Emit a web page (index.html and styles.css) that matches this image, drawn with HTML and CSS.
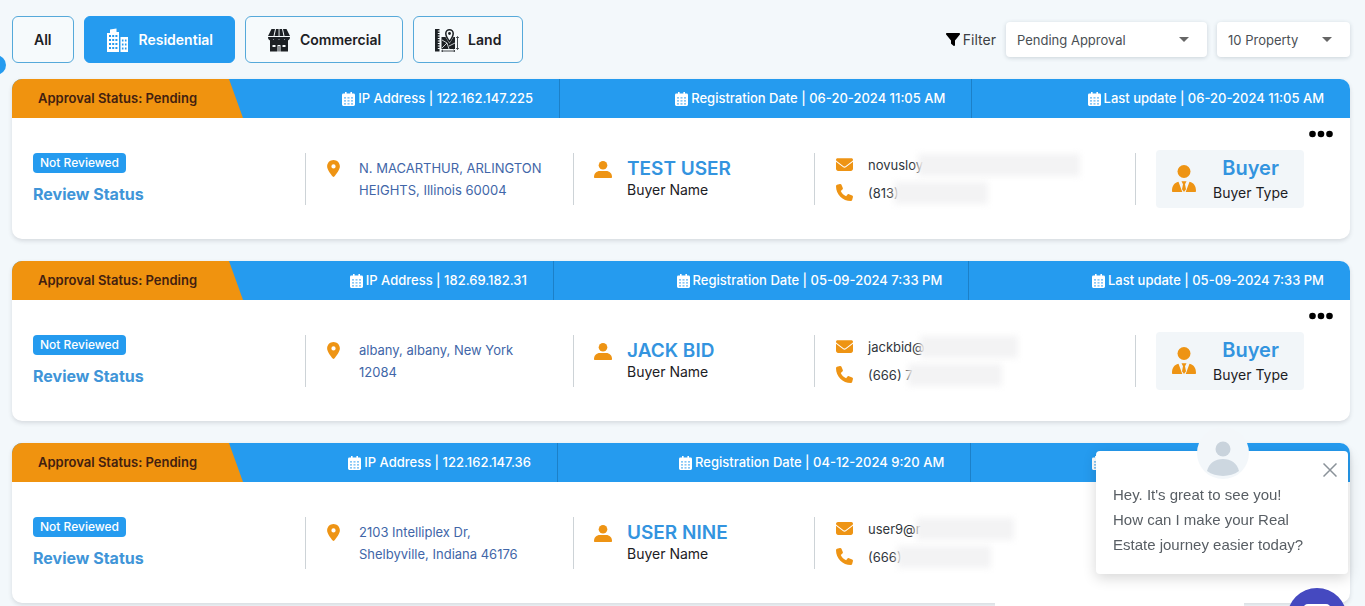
FILE: index.html
```html
<!DOCTYPE html>
<html lang="en">
<head>
<meta charset="utf-8">
<meta name="viewport" content="width=device-width, initial-scale=1">
<title>Buyers</title>
<link rel="stylesheet" href="styles.css">
</head>
<body>
<svg class="sprite" aria-hidden="true">
  <symbol id="calendar" viewBox="0 0 13 14">
    <path fill="currentColor" d="M3 0h1.600v1.600h3.800V0H10v1.600h1.600A1.400 1.400 0 0 1 13 3v9.600a1.400 1.400 0 0 1-1.400 1.400H1.400A1.400 1.400 0 0 1 0 12.600V3a1.400 1.400 0 0 1 1.400-1.400H3z"/>
    <path fill="#259bef" fill-opacity=".75" d="M2 5.200h2v1.300H2zm3.500 0h2v1.300h-2zm3.500 0h2v1.300H9zM2 8.200h2v1.300H2zm3.500 0h2v1.300h-2zm3.500 0h2v1.300H9zM2 11.200h2v1.300H2zm3.500 0h2v1.300h-2zm3.500 0h2v1.300H9z"/>
  </symbol>
  <symbol id="pin" viewBox="0 0 384 512">
    <path fill="currentColor" d="M215.700 499.200C267 435 384 279.400 384 192 384 86 298 0 192 0S0 86 0 192c0 87.400 117 243 168.300 307.200 12.300 15.300 35.100 15.300 47.400 0zM192 128a64 64 0 1 1 0 128 64 64 0 1 1 0-128z"/>
  </symbol>
  <symbol id="person" viewBox="0 0 18 17">
    <circle cx="9" cy="4.300" r="4.300" fill="currentColor"/>
    <path fill="currentColor" d="M0 16c0-3.600 2.400-6 6-6h6c3.600 0 6 2.400 6 6 0 .6-.4 1-1 1H1c-.6 0-1-.4-1-1z"/>
  </symbol>
  <symbol id="mail" viewBox="0 64 512 384">
    <path fill="currentColor" d="M48 64C21.500 64 0 85.500 0 112c0 15.100 7.100 29.300 19.200 38.400l217.600 163.200c11.400 8.500 27 8.500 38.400 0l217.600-163.200c12.100-9.100 19.200-23.300 19.200-38.400 0-26.500-21.500-48-48-48H48zM0 176v208c0 35.300 28.700 64 64 64h384c35.300 0 64-28.700 64-64V176L294.400 339.200c-22.800 17.100-54 17.100-76.800 0L0 176z"/>
  </symbol>
  <symbol id="phone" viewBox="0 0 512 512">
    <path fill="currentColor" d="M164.900 24.600c-7.700-18.600-28-28.500-47.400-23.200l-88 24C12.100 30.200 0 46 0 64c0 247.400 200.600 448 448 448 18 0 33.800-12.100 38.600-29.500l24-88c5.300-19.400-4.600-39.700-23.200-47.400l-96-40c-16.300-6.800-35.200-2.100-46.300 11.600L304.700 368C234.300 334.700 177.300 277.700 144 207.300l49.300-40.300c13.700-11.200 18.400-30 11.600-46.300l-40-96z"/>
  </symbol>
  <symbol id="agent" viewBox="0 0 24 27">
    <circle cx="12" cy="6.500" r="6.500" fill="currentColor"/>
    <path fill="currentColor" d="M0 26c0-4.800 2-8.300 6.500-9.200L10.300 27H1c-.6 0-1-.4-1-1zM24 26c0-4.800-2-8.300-6.500-9.200L13.700 27H23c.6 0 1-.4 1-1zM9.500 16.200h5l-1.500 3 1 5L12 27l-2-2.800 1-5z"/>
  </symbol>
  <symbol id="dots" viewBox="0 0 24 8">
    <g fill="currentColor"><circle cx="3.500" cy="4" r="3.300"/><circle cx="12" cy="4" r="3.300"/><circle cx="20.500" cy="4" r="3.300"/></g>
  </symbol>
</svg>

<button class="side-toggle" type="button" aria-label="Toggle sidebar"></button>

<main class="page">
  <div class="toolbar">
    <nav class="tabs" aria-label="Property type">
      <button class="tab" type="button">All</button>
      <button class="tab tab-active" type="button">
        <svg class="tab-icon" viewBox="0 0 22 24" aria-hidden="true">
          <path fill="currentColor" fill-rule="evenodd" d="M3 1.500 9.500.500V4H12v20H0V5h3zM2 7v2h2V7zm3.200 0v2h2V7zm3.200 0v2h2V7zM2 11v2h2v-2zm3.200 0v2h2v-2zm3.200 0v2h2v-2zM2 15v2h2v-2zm3.200 0v2h2v-2zm3.200 0v2h2v-2zM2 19v2h2v-2zm3.200 0v2h2v-2zm3.200 0v2h2v-2zM13.500 9H21v15h-7.500zm1.400 2.500v2h1.600v-2zm3 0v2h1.600v-2zm-3 4v2h1.600v-2zm3 0v2h1.600v-2zm-3 4v2h1.600v-2zm3 0v2h1.600v-2z"/>
        </svg>
        Residential
      </button>
      <button class="tab" type="button">
        <svg class="tab-icon" viewBox="0 0 22 24" aria-hidden="true">
          <path fill="currentColor" d="M3.500 1H7L5.500 8H0zM8 1h2.600v7H6.500zM11.500 1H14l1.500 7h-4zM15 1h3.500L22 8h-5.500zM0 9h22c0 2.300-1 3.500-2.800 3.500-1.300 0-2.200-.5-2.700-1.300-.5.800-1.400 1.300-2.700 1.300s-2.300-.5-2.800-1.300c-.5.800-1.500 1.300-2.800 1.300s-2.200-.5-2.700-1.300c-.5.800-1.400 1.300-2.700 1.300C1 12.500 0 11.300 0 9z"/>
          <path fill="currentColor" fill-rule="evenodd" d="M2 12h18v11.500H2zm2.500 5v2h3v-2zm5 0v6.500h3V17zm5 0v2h3v-2z"/>
          <path fill="currentColor" d="M10.500 18h1v5.500h-1z"/>
        </svg>
        Commercial
      </button>
      <button class="tab" type="button">
        <svg class="tab-icon" viewBox="0 0 24 24" aria-hidden="true">
          <path fill="currentColor" d="M0 1h4.500v1.500H2.800v1h1.700V5H2.800v1h1.700v1.500H2.800v1h1.700V10H2.800v1h1.700v1.500H2.800v1h1.700V15H2.800v1h1.700v1.500H2.800v1h1.700V20H2.800v1h1.700v2.500H0zM6.500 9h4l4 6.500L18.500 9H20v12H6.500z"/>
          <path fill="#f6fafc" stroke="currentColor" stroke-width="1.500" d="M14.500 13.500C12 10 10.800 8 10.800 5.500a3.700 3.700 0 0 1 7.400 0c0 2.500-1.200 4.500-3.700 8z"/>
          <circle cx="14.500" cy="5.500" r="1.400" fill="currentColor"/>
          <path fill="none" stroke="#f6fafc" stroke-width=".8" d="m7 12 5 3 2 6M12 15l-5 5M14 18l6-3"/>
          <path fill="none" stroke="currentColor" stroke-width=".8" d="M22.500 9v12m-1.300-11 1.300-1.500L23.800 10m-2.600 10 1.300 1.500 1.300-1.500M7 23h12.500M8 21.800 6.500 23 8 24m10.500-2.200L20 23l-1.500 1"/>
        </svg>
        Land
      </button>
    </nav>
    <div class="filters">
      <label class="filter-label" for="status">
        <svg class="filter-icon" viewBox="0 0 14 13" aria-hidden="true"><path d="M1 0h12c.9 0 1.300 1 .7 1.700L9 7.500V12c0 .9-.9 1.200-1.500.7L5.400 11A1 1 0 0 1 5 10.200V7.500L.3 1.700C-.3 1 .1 0 1 0z"/></svg>
        Filter
      </label>
      <span class="select-wrap">
        <select class="select select-status" id="status"><option>Pending Approval</option></select>
      </span>
      <span class="select-wrap">
        <select class="select select-count" aria-label="Items per page"><option>10 Property</option></select>
      </span>
    </div>
  </div>

  <section class="cards">
    <article class="card">
      <header class="card-head">
        <div class="approval">Approval Status: Pending</div>
        <div class="meta"><svg class="cal" aria-hidden="true"><use href="#calendar"/></svg>IP Address | 122.162.147.225</div>
        <div class="meta"><svg class="cal" aria-hidden="true"><use href="#calendar"/></svg>Registration Date | 06-20-2024 11:05 AM</div>
        <div class="meta"><svg class="cal" aria-hidden="true"><use href="#calendar"/></svg>Last update | 06-20-2024 11:05 AM</div>
      </header>
      <div class="card-body">
        <button class="more" type="button" aria-label="More"><svg class="more-icon" aria-hidden="true"><use href="#dots"/></svg></button>
        <div class="cell review"><span class="badge">Not Reviewed</span><a class="review-link" href="#">Review Status</a></div>
        <div class="cell place"><svg class="pin" aria-hidden="true"><use href="#pin"/></svg><address class="address">N. MACARTHUR, ARLINGTON<br>HEIGHTS, Illinois 60004</address></div>
        <div class="cell user"><svg class="person" aria-hidden="true"><use href="#person"/></svg><div><h2 class="name">TEST USER</h2><p class="caption">Buyer Name</p></div></div>
        <div class="cell contact">
          <div class="contact-row"><svg class="mail" aria-hidden="true"><use href="#mail"/></svg><span>novusloy</span><i class="redacted mail-long"></i></div>
          <div class="contact-row"><svg class="phone" aria-hidden="true"><use href="#phone"/></svg><span>(813)</span><i class="redacted tel"></i></div>
        </div>
        <div class="cell type"><div class="type-box"><svg class="agent" aria-hidden="true"><use href="#agent"/></svg><div class="type-text"><h3 class="type-name">Buyer</h3><p class="caption">Buyer Type</p></div></div></div>
      </div>
    </article>

    <article class="card">
      <header class="card-head">
        <div class="approval">Approval Status: Pending</div>
        <div class="meta"><svg class="cal" aria-hidden="true"><use href="#calendar"/></svg>IP Address | 182.69.182.31</div>
        <div class="meta"><svg class="cal" aria-hidden="true"><use href="#calendar"/></svg>Registration Date | 05-09-2024 7:33 PM</div>
        <div class="meta"><svg class="cal" aria-hidden="true"><use href="#calendar"/></svg>Last update | 05-09-2024 7:33 PM</div>
      </header>
      <div class="card-body">
        <button class="more" type="button" aria-label="More"><svg class="more-icon" aria-hidden="true"><use href="#dots"/></svg></button>
        <div class="cell review"><span class="badge">Not Reviewed</span><a class="review-link" href="#">Review Status</a></div>
        <div class="cell place"><svg class="pin" aria-hidden="true"><use href="#pin"/></svg><address class="address">albany, albany, New York<br>12084</address></div>
        <div class="cell user"><svg class="person" aria-hidden="true"><use href="#person"/></svg><div><h2 class="name">JACK BID</h2><p class="caption">Buyer Name</p></div></div>
        <div class="cell contact">
          <div class="contact-row"><svg class="mail" aria-hidden="true"><use href="#mail"/></svg><span>jackbid@</span><i class="redacted mail-short"></i></div>
          <div class="contact-row"><svg class="phone" aria-hidden="true"><use href="#phone"/></svg><span>(666) 7</span><i class="redacted tel"></i></div>
        </div>
        <div class="cell type"><div class="type-box"><svg class="agent" aria-hidden="true"><use href="#agent"/></svg><div class="type-text"><h3 class="type-name">Buyer</h3><p class="caption">Buyer Type</p></div></div></div>
      </div>
    </article>

    <article class="card">
      <header class="card-head">
        <div class="approval">Approval Status: Pending</div>
        <div class="meta"><svg class="cal" aria-hidden="true"><use href="#calendar"/></svg>IP Address | 122.162.147.36</div>
        <div class="meta"><svg class="cal" aria-hidden="true"><use href="#calendar"/></svg>Registration Date | 04-12-2024 9:20 AM</div>
        <div class="meta"><svg class="cal" aria-hidden="true"><use href="#calendar"/></svg>Last update | 04-12-2024 9:20 AM</div>
      </header>
      <div class="card-body">
        <div class="cell review"><span class="badge">Not Reviewed</span><a class="review-link" href="#">Review Status</a></div>
        <div class="cell place"><svg class="pin" aria-hidden="true"><use href="#pin"/></svg><address class="address">2103 Intelliplex Dr,<br>Shelbyville, Indiana 46176</address></div>
        <div class="cell user"><svg class="person" aria-hidden="true"><use href="#person"/></svg><div><h2 class="name">USER NINE</h2><p class="caption">Buyer Name</p></div></div>
        <div class="cell contact">
          <div class="contact-row"><svg class="mail" aria-hidden="true"><use href="#mail"/></svg><span>user9@r</span><i class="redacted mail-short"></i></div>
          <div class="contact-row"><svg class="phone" aria-hidden="true"><use href="#phone"/></svg><span>(666)</span><i class="redacted tel"></i></div>
        </div>
        <div class="cell type"></div>
      </div>
    </article>
  </section>
</main>

<div class="chat-shelf"></div>
<aside class="chat" aria-label="Chat">
  <svg class="chat-avatar" viewBox="0 0 52 52" aria-hidden="true">
    <circle cx="26" cy="26" r="26" fill="#f3f7fa"/>
    <circle cx="26" cy="22" r="7.500" fill="#c9d3dc"/>
    <path fill="#cdd7e0" d="M10 44c2-8 8-12 16-12s14 4 16 12c-9 6.500-23 6.500-32 0z"/>
  </svg>
  <button class="chat-close" type="button" aria-label="Close">
    <svg class="chat-x" viewBox="0 0 14 14" aria-hidden="true"><path d="m.5.500 13 13m0-13-13 13" fill="none" stroke="#8a9299" stroke-width="1.500"/></svg>
  </button>
  <p class="chat-text">Hey. It's great to see you!<br>How can I make your Real<br>Estate journey easier today?</p>
</aside>
<button class="chat-launch" type="button" aria-label="Open chat">
  <svg class="launch-icon" viewBox="0 0 28 28" aria-hidden="true"><path fill="#fff" d="M5 0h18a5 5 0 0 1 5 5v14a5 5 0 0 1-5 5h-3l-6 4-6-4H5a5 5 0 0 1-5-5V5a5 5 0 0 1 5-5z"/></svg>
</button>
</body>
</html>
```

FILE: styles.css
```css
* { box-sizing: border-box; }

html { height: 100%; overflow: hidden; }

body {
  margin: 0;
  height: 100%;
  overflow: hidden;
  background: #f3f8fb;
  color: #1c2024;
  font-family: Inter, "Liberation Sans", sans-serif;
  font-size: 13px;
}

button, select { font: inherit; color: inherit; }
button { border: 0; padding: 0; background: none; cursor: pointer; }
h2, h3, p { margin: 0; }
svg { display: block; flex: none; }

.sprite { position: absolute; width: 0; height: 0; }

.side-toggle {
  position: fixed;
  left: -14px;
  top: 55px;
  width: 20px;
  height: 20px;
  border-radius: 50%;
  background: #259bef;
}

.page { padding: 16px 15px 0 12px; }

/* Toolbar */
.toolbar { display: flex; align-items: center; justify-content: space-between; }
.tabs { display: flex; gap: 10px; }
.tab {
  display: flex;
  align-items: center;
  gap: 9px;
  height: 47px;
  padding: 0 21px;
  border: 1px solid #55a9da;
  border-radius: 6px;
  background: #f6fafc;
  font-size: 14px;
  font-weight: 600;
  line-height: 20px;
}
.tab-active { background: #259bef; border-color: #259bef; color: #fff; }
.tab-icon { width: 24px; height: 24px; }

.filters { display: flex; align-items: center; gap: 10px; }
.filter-label { display: flex; align-items: center; gap: 3px; font-size: 14px; color: #3c4043; }
.filter-icon { width: 14px; height: 13px; fill: #000; }
.select-wrap { display: grid; align-items: center; }
.select-wrap::after {
  content: "";
  grid-area: 1 / 1;
  justify-self: end;
  margin-right: 18px;
  border: 5px solid transparent;
  border-top-color: #666;
  border-bottom: 0;
  pointer-events: none;
}
.select {
  grid-area: 1 / 1;
  appearance: none;
  height: 35px;
  padding: 0 11px;
  border: 0;
  border-radius: 4px;
  background: #fff;
  box-shadow: 0 1px 4px rgba(60, 80, 100, .22);
  color: #4a4f54;
}
.select-status { width: 201px; }
.select-count { width: 133px; }

/* Cards */
.cards { display: grid; gap: 22px; margin-top: 16px; }
.card {
  border-radius: 10px;
  background: #fff;
  box-shadow: 0 2px 4px rgba(60, 70, 80, .16);
}
.card-head {
  display: flex;
  height: 39px;
  overflow: hidden;
  border-radius: 10px 10px 0 0;
  background: #259bef;
  color: #fff;
  font-weight: 500;
  line-height: 39px;
  white-space: nowrap;
}
.approval {
  flex: none;
  width: 231px;
  margin-right: -16px;
  padding-left: 26px;
  background: #f0930f;
  clip-path: polygon(0 0, 217px 0, 100% 100%, 0 100%);
  color: #42200f;
  font-weight: 600;
}
.meta {
  display: flex;
  flex: 1 1 auto;
  align-items: center;
  justify-content: flex-end;
  gap: 3px;
  padding-right: 26px;
  border-right: 1px solid #1c80c8;
}
.meta:last-child { border-right: 0; }
.cal { width: 13px; height: 14px; }

.card-body {
  position: relative;
  display: grid;
  grid-template-columns: 293fr 268fr 241fr 321fr 215fr;
  align-items: center;
  min-height: 121px;
}
.more { position: absolute; top: 12px; right: 17px; color: #000; }
.more-icon { width: 24px; height: 8px; }

.cell { display: flex; height: 52px; padding-left: 20px; border-left: 1px solid #cdd3d7; }
.review { flex-direction: column; align-items: flex-start; justify-content: space-between; border-left-color: transparent; }
.badge {
  padding: 0 7px;
  border-radius: 4px;
  background: #259bef;
  color: #fff;
  font-size: 12px;
  font-weight: 500;
  line-height: 20px;
}
.review-link { color: #4095d8; font-size: 16px; font-weight: 700; line-height: 22px; text-decoration: none; }

.place { gap: 19px; padding-top: 4px; padding-left: 21px; }
.pin { width: 13px; height: 17px; margin-top: 3px; color: #ee9414; }
.address { color: #4166a8; font-style: normal; line-height: 22px; white-space: nowrap; }

.user { gap: 15px; padding-top: 4px; }
.person { width: 18px; height: 17px; margin-top: 4px; color: #ee9414; }
.name { color: #3394df; font-size: 19px; font-weight: 600; line-height: 24px; }
.caption { font-size: 14px; line-height: 18px; }

.contact { flex-direction: column; gap: 4px; padding-left: 21px; }
.contact-row { display: flex; align-items: center; height: 24px; color: #30363c; }
.contact-row span { margin-left: 15px; }
.mail { width: 17px; height: 13px; color: #ee9414; }
.phone { width: 17px; height: 17px; color: #ee9414; }
.redacted { height: 22px; margin-left: -5px; background: #f3f3f4; filter: blur(3px); }
.mail-long { width: 162px; }
.mail-short { width: 98px; }
.tel { width: 94px; }

.type { align-items: center; }
.type-box {
  display: flex;
  flex: none;
  align-items: center;
  gap: 17px;
  padding: 4px 16px;
  border-radius: 4px;
  background: #f2f6f9;
}
.agent { width: 24px; height: 27px; color: #ee9414; }
.type-text { text-align: center; }
.type-name { color: #3394df; font-size: 20px; font-weight: 600; line-height: 28px; }
.type-text .caption { line-height: 22px; }

/* Chat widget */
.chat-shelf { position: fixed; right: 121px; bottom: 0; width: 249px; height: 4px; background: #fff; }
.chat {
  position: fixed;
  right: 17px;
  bottom: 32px;
  width: 252px;
  padding: 31px 17px 17px;
  border-radius: 4px;
  background: #fff;
  box-shadow: 0 4px 14px rgba(0, 0, 0, .16);
}
.chat-avatar { position: absolute; top: -24px; left: 101px; width: 52px; height: 52px; }
.chat-close { position: absolute; top: 12px; right: 11px; }
.chat-x { width: 14px; height: 14px; }
.chat-text { color: #585e64; font-family: "Liberation Sans", sans-serif; font-size: 15px; line-height: 25px; }
.chat-launch {
  position: fixed;
  right: 18px;
  bottom: -42px;
  display: grid;
  place-items: center;
  width: 60px;
  height: 60px;
  border-radius: 50%;
  background: #4549c0;
}
.launch-icon { width: 28px; height: 28px; }
```
